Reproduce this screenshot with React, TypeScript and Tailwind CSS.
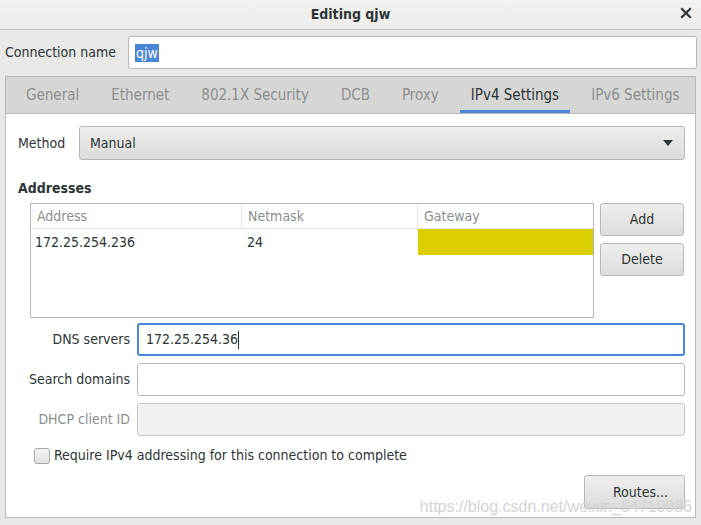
import React from 'react';

const font = { fontFamily: '"DejaVu Sans Condensed", "DejaVu Sans", sans-serif', fontStretch: 'condensed' as const };

const tabs = ['General', 'Ethernet', '802.1X Security', 'DCB', 'Proxy', 'IPv4 Settings', 'IPv6 Settings'];

const Btn: React.FC<{ label: string; className?: string }> = ({ label, className }) => (
  <div className={`shrink-0 flex items-center rounded-[3px] border border-[#b6b6b3] bg-gradient-to-b from-[#eeeeec] to-[#dcdcda] text-[14px] text-[#2e3436] ${className ?? ''}`}>
    {label}
  </div>
);

export default function App() {
  return (
    <div className="w-[701px] h-[525px] bg-[#e8e8e7] text-[#2e3436] text-[14px] overflow-hidden" style={font}>
      {/* title bar */}
      <div className="h-[30px] flex items-center justify-center relative bg-gradient-to-b from-[#f2f2f1] to-[#ececeb] border-b border-[#c2c2bf]">
        <span className="font-bold text-[14px] text-[#2e3436]">Editing qjw</span>
        <span className="absolute right-[9px] top-[7px]">
          <svg width="12" height="12" viewBox="0 0 12 12">
            <path d="M2 2 L10 10 M10 2 L2 10" stroke="#2e3436" strokeWidth="2.2" strokeLinecap="square" />
          </svg>
        </span>
      </div>

      {/* connection name */}
      <div className="flex items-center pl-[5px] pr-[4px] pt-[6px] pb-[7px]">
        <span className="w-[123px]">Connection name</span>
        <div className="flex-1 h-[33px] bg-white border border-[#b8b8b5] rounded-[3px] flex items-center pl-[6px]">
          <span className="bg-[#4a86d8] text-white px-[1px] leading-[18px]">qjw</span>
        </div>
      </div>

      {/* notebook */}
      <div className="mx-[5px] border border-[#b8b8b5] h-[442px] flex flex-col">
        <div className="h-[37px] bg-[#d6d6d4] border-b border-[#b8b8b5] flex pl-[9px] gap-[10px] text-[15px]">
          {tabs.map(t => (
            <div
              key={t}
              className={`px-[11px] flex items-center border-b-[3px] ${t === 'IPv4 Settings' ? 'border-[#4a86d8] text-[#2e3436]' : 'border-transparent text-[#8b8e8f]'}`}
            >
              <span className="pt-[3px]">{t}</span>
            </div>
          ))}
        </div>

        <div className="flex-1 bg-white relative pl-[12px] pr-[10px] pt-[12px]">
          {/* method */}
          <div className="flex items-center">
            <span className="w-[61px]">Method</span>
            <div className="flex-1 h-[34px] rounded-[3px] border border-[#b6b6b3] bg-gradient-to-b from-[#ededeb] to-[#dcdcda] flex items-center justify-between px-[10px]">
              <span>Manual</span>
              <svg width="10" height="6" viewBox="0 0 10 6" className="mr-[1px]"><path d="M0 0 H10 L5 6 Z" fill="#2e3436" /></svg>
            </div>
          </div>

          <div className="font-bold mt-[18px] leading-[20px]">Addresses</div>

          <div className="flex gap-[6px] mt-[5px] pl-[12px]">
            <div className="w-[564px] h-[115px] border border-[#b8b8b5] bg-white">
              <div className="flex h-[25px] border-b border-[#e8e8e6] text-[#8b8e8f]">
                <div className="w-[211px] border-r border-[#e8e8e6] pl-[6px] flex items-center">Address</div>
                <div className="w-[176px] border-r border-[#e8e8e6] pl-[6px] flex items-center">Netmask</div>
                <div className="flex-1 pl-[6px] flex items-center">Gateway</div>
              </div>
              <div className="flex h-[26px]">
                <div className="w-[211px] pl-[4px] flex items-center">172.25.254.236</div>
                <div className="w-[176px] pl-[5px] flex items-center">24</div>
                <div className="flex-1 bg-[#dccf00]"></div>
              </div>
            </div>
            <div className="flex flex-col gap-[7px] w-[84px]">
              <Btn label="Add" className="h-[33px] justify-center" />
              <Btn label="Delete" className="h-[33px] justify-center" />
            </div>
          </div>

          {/* dns etc */}
          <div className="flex flex-col gap-[7px] mt-[5px]">
            <div className="flex items-center">
              <span className="w-[119px] text-right pr-[7px]">DNS servers</span>
              <div className="flex-1 h-[33px] bg-white border-2 border-[#4a86d8] rounded-[3px] flex items-center pl-[7px]">
                <span>172.25.254.36</span>
                <span className="w-[1px] h-[18px] bg-[#2e3436]"></span>
              </div>
            </div>
            <div className="flex items-center">
              <span className="w-[119px] text-right pr-[7px]">Search domains</span>
              <div className="flex-1 h-[33px] bg-white border border-[#b8b8b5] rounded-[3px]"></div>
            </div>
            <div className="flex items-center">
              <span className="w-[119px] text-right pr-[7px] text-[#8b8e8f]">DHCP client ID</span>
              <div className="flex-1 h-[33px] bg-[#f1f1f0] border border-[#c8c8c5] rounded-[3px]"></div>
            </div>
          </div>

          <div className="flex items-center mt-[9px] pl-[16px] gap-[4px]">
            <span className="w-[16px] h-[16px] rounded-[3px] border border-[#a8a8a5] bg-gradient-to-b from-[#f4f4f3] to-[#e2e2e0]"></span>
            <span>Require IPv4 addressing for this connection to complete</span>
          </div>

          <div className="flex justify-end mt-[9px]">
            <Btn label="Routes..." className="w-[101px] h-[34px] justify-end pr-[16px]" />
          </div>

          <div className="absolute right-[3px] bottom-[0px] text-[16px] leading-[20px] text-[#d4d4d4]" style={{ fontFamily: '"Liberation Sans", sans-serif' }}>
            https://blog.csdn.net/weixin_54719086
          </div>
        </div>
      </div>
    </div>
  );
}
